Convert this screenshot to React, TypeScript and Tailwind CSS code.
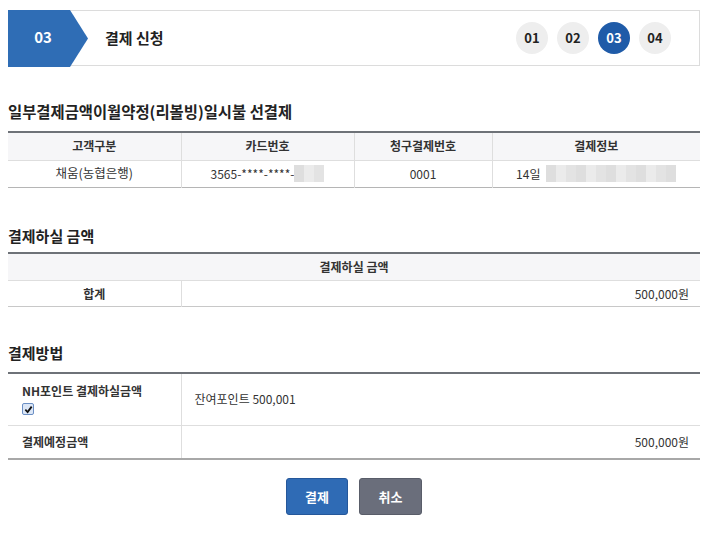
import React from 'react';

const font = { fontFamily: '"Noto Sans CJK KR", "Liberation Sans", sans-serif' };

const Blur = ({ w }: { w: number }) => (
  <span className="inline-flex h-[17px] align-middle bg-[#f1f1f1]" style={{ width: w }}>
    {Array.from({ length: Math.round(w / 10) }).map((_, i) => (
      <span
        key={i}
        className={`h-full w-[10px] ${i % 3 === 0 ? 'bg-[#dedede]' : i % 3 === 1 ? 'bg-[#ebebeb]' : 'bg-[#e3e3e3]'}`}
      />
    ))}
  </span>
);

const Steps = () => (
  <div className="flex items-center gap-[9px] pr-[28px]">
    {['01', '02', '03', '04'].map((s) => (
      <div
        key={s}
        className={`w-[32px] h-[32px] rounded-full flex items-center justify-center text-[13px] font-bold ${
          s === '03' ? 'bg-[#1f5ba8] text-white' : 'bg-[#eeeeee] text-[#222]'
        }`}
      >
        {s}
      </div>
    ))}
  </div>
);

export default function App() {
  return (
    <div className="w-[728px] h-[542px] bg-white text-[#333]" style={font}>
      <div className="pl-[8px] pt-[10px] w-[700px]">
        {/* header */}
        <div className="relative flex items-center justify-between h-[56px] border border-[#dcdcdc]">
          <div className="flex items-center h-full">
            <div className="relative w-[80px] h-[56px] -ml-px -mt-px">
              <svg width="80" height="57" viewBox="0 0 80 57" className="absolute inset-0">
                <polygon points="0,0 62,0 80,28.5 62,57 0,57" fill="#2f6db5" />
              </svg>
              <span className="absolute left-0 top-0 w-[70px] h-[56px] flex items-center justify-center text-white font-bold text-[15px]">
                03
              </span>
            </div>
            <span className="ml-[17px] text-[15px] font-bold text-[#222]">결제 신청</span>
          </div>
          <Steps />
        </div>

        {/* section 1 */}
        <h2 className="mt-[35px] text-[15.4px] font-semibold text-[#222] leading-[20px]">
          일부결제금액이월약정(리볼빙)일시불 선결제
        </h2>
        <table className="mt-[10px] w-full border-collapse text-[12px] border-t-2 border-t-[#6e7278] border-b border-b-[#b5b5b5]">
          <thead>
            <tr className="bg-[#f6f6f8] h-[28px] border-b border-[#dedede]">
              <th className="w-[173px] font-semibold border-r border-[#dedede]">고객구분</th>
              <th className="w-[173px] font-semibold border-r border-[#dedede]">카드번호</th>
              <th className="w-[138px] font-semibold border-r border-[#dedede]">청구결제번호</th>
              <th className="font-semibold">결제정보</th>
            </tr>
          </thead>
          <tbody>
            <tr className="h-[27px]">
              <td className="text-center border-r border-[#dedede] text-[12.5px]">채움(농협은행)</td>
              <td className="text-center border-r border-[#dedede]">
                <span className="inline-flex items-center">
                  3565-****-****-<Blur w={30} />
                </span>
              </td>
              <td className="text-center border-r border-[#dedede]">0001</td>
              <td className="text-center">
                <span className="inline-flex items-center gap-[6px]">
                  14일 <Blur w={130} />
                </span>
              </td>
            </tr>
          </tbody>
        </table>

        {/* section 2 */}
        <h2 className="mt-[38px] text-[15px] font-semibold text-[#222] leading-[20px]">결제하실 금액</h2>
        <table className="mt-[6px] w-full border-collapse text-[12px] border-t-2 border-t-[#6e7278] border-b border-b-[#c8c8c8]">
          <tbody>
            <tr className="bg-[#f6f6f8] h-[28px] border-b border-[#dedede]">
              <th colSpan={2} className="font-semibold">결제하실 금액</th>
            </tr>
            <tr className="h-[26px]">
              <th className="w-[173px] font-semibold border-r border-[#dedede]">합계</th>
              <td className="text-right pr-[11px]">500,000원</td>
            </tr>
          </tbody>
        </table>

        {/* section 3 */}
        <h2 className="mt-[36px] text-[15px] font-semibold text-[#222] leading-[20px]">결제방법</h2>
        <table className="mt-[9px] w-full border-collapse text-[12px] border-t-2 border-t-[#6e7278] border-b-2 border-b-[#a8a8a8]">
          <tbody>
            <tr className="h-[52px] border-b border-[#dedede]">
              <th className="w-[173px] text-left pl-[14px] font-semibold border-r border-[#dedede] align-middle">
                <div className="leading-[16px]">NH포인트 결제하실금액</div>
                <div className="mt-[4px] w-[12px] h-[12px] rounded-[2px] border border-[#6b8fc4] bg-[#dbe6f6] flex items-center justify-center">
                  <svg width="9" height="9" viewBox="0 0 10 10">
                    <path d="M1.5 5.2 L4 7.8 L8.5 1.8" stroke="#111" strokeWidth="2" fill="none" />
                  </svg>
                </div>
              </th>
              <td className="pl-[13px]">잔여포인트 500,001</td>
            </tr>
            <tr className="h-[34px]">
              <th className="text-left pl-[14px] font-semibold border-r border-[#dedede]">결제예정금액</th>
              <td className="text-right pr-[11px]">500,000원</td>
            </tr>
          </tbody>
        </table>

        {/* buttons */}
        <div className="mt-[18px] flex justify-center gap-[11px]">
          <button className="w-[62px] h-[37px] rounded-[3px] bg-[#2f6bb5] border border-[#25579a] text-white text-[13px] font-bold">
            결제
          </button>
          <button className="w-[63px] h-[37px] rounded-[3px] bg-[#6a6e7b] border border-[#595d69] text-white text-[13px] font-bold">
            취소
          </button>
        </div>
      </div>
    </div>
  );
}
